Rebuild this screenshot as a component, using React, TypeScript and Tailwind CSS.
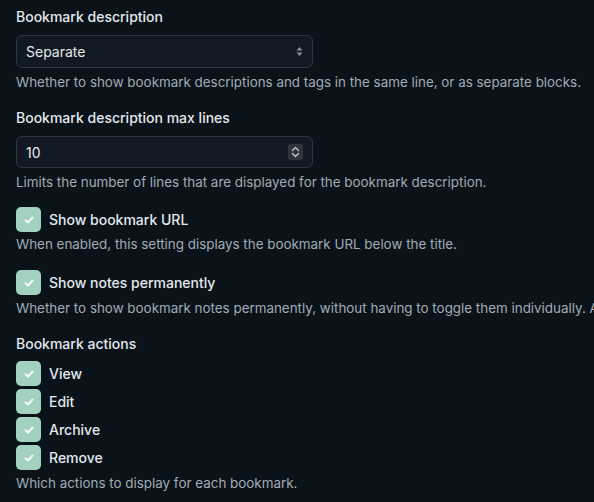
import React from 'react';

const ACTIONS = ['View', 'Edit', 'Archive', 'Remove'];

function CheckBox() {
  return (
    <span className="w-[25px] h-[25px] rounded-[5px] bg-[#a2d2bf] flex items-center justify-center shrink-0">
      <svg width="10" height="8" viewBox="0 0 10 8" fill="none">
        <path d="M1.5 4.2 L4 6.5 L8.5 1.5" stroke="#f3faf7" strokeWidth="2" strokeLinecap="round" strokeLinejoin="round" />
      </svg>
    </span>
  );
}

function CheckRow({ label }: { label: string }) {
  return (
    <label className="flex items-center gap-2 h-[25px] text-[14px] font-medium text-[#e4e8ec]">
      <CheckBox />
      <span>{label}</span>
    </label>
  );
}

function Help({ children }: { children: React.ReactNode }) {
  return <p className="text-[13.4px] leading-[18px] text-[#a3abb4] whitespace-nowrap">{children}</p>;
}

function Title({ children }: { children: React.ReactNode }) {
  return <h3 className="text-[14px] leading-[20px] font-medium text-[#e4e8ec]">{children}</h3>;
}

export default function App() {
  return (
    <div
      className="w-[594px] h-[502px] overflow-hidden bg-[#0a131a] px-4 pt-[7px]"
      style={{ fontFamily: 'Inter, "Noto Sans", sans-serif' }}
    >
      <section>
        <Title>Bookmark description</Title>
        <div className="mt-2 w-[297px] h-[33px] rounded-[6px] border border-[#2c3640] bg-[#111a22] flex items-center justify-between pl-[9px] pr-[9px]">
          <span className="text-[14px] text-[#e4e8ec]">Separate</span>
          <svg width="7" height="11" viewBox="0 0 7 11">
            <path d="M3.5 1 L6.5 4.5 H0.5 Z" fill="#8a939c" />
            <path d="M3.5 10 L6.5 6.5 H0.5 Z" fill="#8a939c" />
          </svg>
        </div>
        <div className="mt-[5px]">
          <Help>Whether to show bookmark descriptions and tags in the same line, or as separate blocks.</Help>
        </div>
      </section>

      <section className="mt-[17px]">
        <Title>Bookmark description max lines</Title>
        <div className="mt-2 w-[297px] h-[32px] rounded-[6px] border border-[#2c3640] bg-[#111a22] flex items-center justify-between pl-[9px] pr-[9px]">
          <span className="text-[14px] text-[#e4e8ec]">10</span>
          <span className="w-[15px] h-[16px] rounded-[2px] bg-[#33333b] flex items-center justify-center">
            <svg width="9" height="12" viewBox="0 0 9 12" fill="none">
              <path d="M1.5 4.5 L4.5 1.5 L7.5 4.5" stroke="#c9ccd2" strokeWidth="1.2" strokeLinecap="round" strokeLinejoin="round" />
              <path d="M1.5 7.5 L4.5 10.5 L7.5 7.5" stroke="#c9ccd2" strokeWidth="1.2" strokeLinecap="round" strokeLinejoin="round" />
            </svg>
          </span>
        </div>
        <div className="mt-[5px]">
          <Help>Limits the number of lines that are displayed for the bookmark description.</Help>
        </div>
      </section>

      <section className="mt-4">
        <CheckRow label="Show bookmark URL" />
        <div className="mt-[3px]">
          <Help>When enabled, this setting displays the bookmark URL below the title.</Help>
        </div>
      </section>

      <section className="mt-[17px]">
        <CheckRow label="Show notes permanently" />
        <div className="mt-[4px]">
          <Help>Whether to show bookmark notes permanently, without having to toggle them individually. Alternatively, notes can be toggled.</Help>
        </div>
      </section>

      <section className="mt-[17px]">
        <Title>Bookmark actions</Title>
        <div className="mt-[7px] flex flex-col gap-[3px]">
          {ACTIONS.map((a) => (
            <CheckRow key={a} label={a} />
          ))}
        </div>
        <div className="mt-[4px]">
          <Help>Which actions to display for each bookmark.</Help>
        </div>
      </section>
    </div>
  );
}
